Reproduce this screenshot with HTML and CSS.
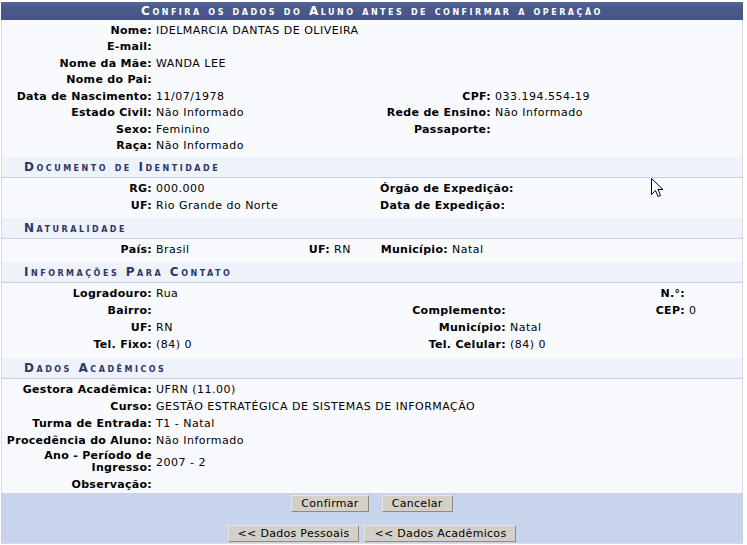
FILE: index.html
```html
<!DOCTYPE html>
<html lang="pt-BR">
<head>
<meta charset="utf-8">
<title>Confira os dados do Aluno</title>
<link rel="stylesheet" href="styles.css">
</head>
<body>
<div class="panel">
  <div class="caption">Confira os dados do Aluno antes de confirmar a operação</div>

  <div class="sec first grid-pessoal">
    <div class="lb">Nome:</div><div class="vl span3">IDELMARCIA DANTAS DE OLIVEIRA</div>
    <div class="lb">E-mail:</div><div class="vl span3"></div>
    <div class="lb">Nome da Mãe:</div><div class="vl span3">WANDA LEE</div>
    <div class="lb">Nome do Pai:</div><div class="vl span3"></div>
    <div class="lb">Data de Nascimento:</div><div class="vl">11/07/1978</div><div class="lb">CPF:</div><div class="vl">033.194.554-19</div>
    <div class="lb">Estado Civil:</div><div class="vl">Não Informado</div><div class="lb">Rede de Ensino:</div><div class="vl">Não Informado</div>
    <div class="lb">Sexo:</div><div class="vl">Feminino</div><div class="lb">Passaporte:</div><div class="vl"></div>
    <div class="lb">Raça:</div><div class="vl span3">Não Informado</div>
  </div>

  <div class="subhead">Documento de Identidade</div>
  <div class="sec grid-pessoal">
    <div class="lb">RG:</div><div class="vl">000.000</div><div class="lb">Órgão de Expedição:</div><div class="vl"></div>
    <div class="lb">UF:</div><div class="vl">Rio Grande do Norte</div><div class="lb">Data de Expedição:</div><div class="vl"></div>
  </div>

  <div class="subhead">Naturalidade</div>
  <div class="sec grid-natural">
    <div class="lb">País:</div><div class="vl">Brasil</div><div class="lb">UF:</div><div class="vl">RN</div><div class="lb">Município:</div><div class="vl">Natal</div>
  </div>

  <div class="subhead">Informações Para Contato</div>
  <div class="sec contact grid-contato">
    <div class="lb">Logradouro:</div><div class="vl span3">Rua</div><div class="lb">N.°:</div><div class="vl"></div>
    <div class="lb">Bairro:</div><div class="vl"></div><div class="lb">Complemento:</div><div class="vl"></div><div class="lb">CEP:</div><div class="vl">0</div>
    <div class="lb">UF:</div><div class="vl">RN</div><div class="lb">Município:</div><div class="vl span3">Natal</div>
    <div class="lb">Tel. Fixo:</div><div class="vl">(84) 0</div><div class="lb">Tel. Celular:</div><div class="vl span3">(84) 0</div>
  </div>

  <div class="subhead">Dados Acadêmicos</div>
  <div class="sec last grid-academico">
    <div class="lb">Gestora Acadêmica:</div><div class="vl">UFRN (11.00)</div>
    <div class="lb">Curso:</div><div class="vl">GESTÃO ESTRATÉGICA DE SISTEMAS DE INFORMAÇÃO</div>
    <div class="lb">Turma de Entrada:</div><div class="vl">T1 - Natal</div>
    <div class="lb">Procedência do Aluno:</div><div class="vl">Não Informado</div>
    <div class="lb wrap">Ano - Período de<br>Ingresso:</div><div class="vl">2007 - 2</div>
    <div class="lb">Observação:</div><div class="vl"></div>
  </div>

  <div class="foot">
    <div class="btnrow row1">
      <button class="btn">Confirmar</button>
      <button class="btn">Cancelar</button>
    </div>
    <div class="btnrow row2">
      <button class="btn">&lt;&lt; Dados Pessoais</button>
      <button class="btn">&lt;&lt; Dados Acadêmicos</button>
    </div>
  </div>

  <svg class="cursor" width="13" height="21" viewBox="0 0 13 21" aria-hidden="true">
    <path d="M0.5 0.5 L0.5 16.5 L4.5 12.5 L7 18.5 L9.5 17.5 L7 11.5 L12 11.5 Z" fill="#fff" stroke="#000" stroke-width="1" stroke-linejoin="miter"/>
  </svg>
</div>
</body>
</html>
```

FILE: styles.css
```css
html, body {
  margin: 0;
  padding: 0;
  background: #ffffff;
}

body {
  font-family: "DejaVu Sans", Verdana, sans-serif;
  font-size: 11px;
  color: #000;
}

.panel {
  position: relative;
  width: 742px;
  margin: 2px 0 0 1px;
  border-bottom: 1px solid #dcdcdc;
}

.caption {
  height: 18px;
  line-height: 18px;
  background: linear-gradient(#56669a, #4a5a8c 30%, #45558a);
  color: #fff;
  font-weight: bold;
  font-variant: small-caps;
  letter-spacing: 2.5px;
  text-align: center;
  font-size: 12px;
}

.sec {
  display: grid;
  background: #f9fafd;
  border-left: 1px solid #d9d9d9;
  border-right: 1px solid #d9d9d9;
  padding: 1.5px 0 4.5px 0;
  grid-auto-rows: minmax(17px, auto);
  align-items: center;
}

.sec.first {
  grid-auto-rows: minmax(16.5px, auto);
  padding-top: 2px;
  padding-bottom: 3px;
}

.sec.contact {
  padding-bottom: 5.5px;
}

.sec.last {
  padding-bottom: 0;
}

.grid-pessoal { grid-template-columns: 150px 228px 111px 1fr; }
.grid-natural { grid-template-columns: 150px 140px 38px 40px 78px 1fr; }
.grid-contato { grid-template-columns: 150px 254px 100px 140px 39px 1fr; }
.grid-academico { grid-template-columns: 150px 1fr; }

.span3 { grid-column: span 3; }

.lb {
  font-weight: bold;
  text-align: right;
  white-space: nowrap;
  line-height: 13px;
  letter-spacing: 0.3px;
}

.lb.wrap {
  line-height: 12px;
  padding: 1.5px 0;
}

.vl {
  padding-left: 4px;
  white-space: nowrap;
  line-height: 13px;
  letter-spacing: 0.5px;
}

.subhead {
  height: 20px;
  line-height: 20px;
  background: #eef2f9;
  border-left: 1px solid #d9d9d9;
  border-right: 1px solid #d9d9d9;
  border-bottom: 1px solid #c5d1ea;
  padding-left: 22px;
  color: #2f3469;
  font-size: 12px;
  font-weight: bold;
  font-variant: small-caps;
  letter-spacing: 2.5px;
}

.foot {
  background: #c8d4ec;
  padding: 2px 0 1px;
  display: flex;
  flex-direction: column;
  gap: 13px;
}

.btnrow {
  display: flex;
  justify-content: center;
}

.row1 { gap: 13px; }
.row2 { gap: 5px; }

.btn {
  font-family: "DejaVu Sans", Verdana, sans-serif;
  font-size: 11px;
  letter-spacing: 0.3px;
  height: 17px;
  line-height: 15px;
  padding: 0 9px;
  margin: 0;
  background: #d4d0c8;
  color: #000;
  border: 1px solid;
  border-color: #e9e7e3 #8e8b84 #8e8b84 #e9e7e3;
  border-radius: 0;
}

.cursor {
  position: absolute;
  left: 650px;
  top: 176px;
}
```
